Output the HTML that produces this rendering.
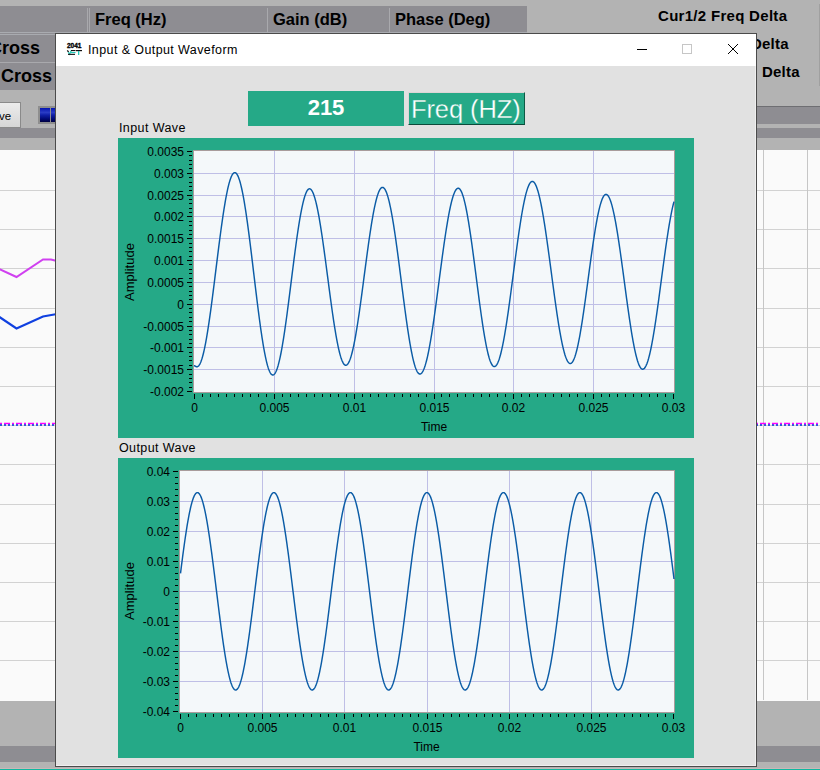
<!DOCTYPE html>
<html><head><meta charset="utf-8"><style>
html,body{margin:0;padding:0;}
body{width:820px;height:770px;overflow:hidden;position:relative;background:#b3b3b3;font-family:"Liberation Sans", sans-serif;-webkit-font-smoothing:antialiased;}
</style></head><body>
<div style="position:absolute;left:0px;top:6px;width:527px;height:27px;background:#8e8d92;"></div>
<div style="position:absolute;left:0px;top:32px;width:527px;height:1px;background:#a9abb0;"></div>
<div style="position:absolute;left:87px;top:8px;width:1px;height:24px;background:#a9a9ad;"></div>
<div style="position:absolute;left:89px;top:8px;width:1px;height:24px;background:#a9a9ad;"></div>
<div style="position:absolute;left:267px;top:8px;width:1px;height:24px;background:#a9a9ad;"></div>
<div style="position:absolute;left:389px;top:8px;width:1px;height:24px;background:#a9a9ad;"></div>
<div style="position:absolute;left:95px;top:11.03px;font-size:16.5px;line-height:1;color:#000;font-weight:bold;white-space:nowrap;">Freq (Hz)</div>
<div style="position:absolute;left:273px;top:11.03px;font-size:16.5px;line-height:1;color:#000;font-weight:bold;white-space:nowrap;">Gain (dB)</div>
<div style="position:absolute;left:395px;top:11.03px;font-size:16.5px;line-height:1;color:#000;font-weight:bold;white-space:nowrap;">Phase (Deg)</div>
<div style="position:absolute;left:0px;top:33px;width:55px;height:1px;background:#8e8d92;"></div>
<div style="position:absolute;left:0px;top:34px;width:55px;height:1px;background:#a9abb0;"></div>
<div style="position:absolute;left:0px;top:35px;width:55px;height:27px;background:#8e8d92;"></div>
<div style="position:absolute;left:0px;top:62px;width:55px;height:1px;background:#a9a9ad;"></div>
<div style="position:absolute;left:0px;top:63px;width:55px;height:27px;background:#8e8d92;"></div>
<div style="position:absolute;left:-11px;top:38.76px;font-size:18px;line-height:1;color:#000;font-weight:bold;white-space:nowrap;">Cross</div>
<div style="position:absolute;left:1px;top:66.76px;font-size:18px;line-height:1;color:#000;font-weight:bold;white-space:nowrap;">Cross</div>
<div style="position:absolute;left:-40px;top:102px;width:59px;height:24px;border:1px solid #8a8a8a;background:linear-gradient(#ececec,#d6d6d6);"></div>
<div style="position:absolute;left:-1px;top:111.27px;font-size:11.5px;line-height:1;color:#000;font-weight:normal;white-space:nowrap;">ve</div>
<div style="position:absolute;left:38px;top:106px;width:30px;height:14px;border:2px solid #8e8e8e;background:#8e8e8e;"></div>
<div style="position:absolute;left:40px;top:108px;width:10px;height:14px;background:linear-gradient(#0414b0,#2a3cc4 32%,#1020a8 50%,#000870 80%,#000040);"></div>
<div style="position:absolute;left:51px;top:108px;width:10px;height:14px;background:linear-gradient(#0414b0,#2a3cc4 32%,#1020a8 50%,#000870 80%,#000040);"></div>
<div style="position:absolute;left:0px;top:128px;width:60px;height:10px;background:#8e8d92;"></div>
<div style="position:absolute;left:756px;top:106px;width:64px;height:1px;background:#6e6e72;"></div>
<div style="position:absolute;left:756px;top:107px;width:64px;height:17px;background:#8e8d92;"></div>
<div style="position:absolute;left:756px;top:128px;width:64px;height:10px;background:#8e8d92;"></div>
<div style="position:absolute;left:0px;top:150px;width:820px;height:551px;background:#fafafa;"></div>
<div style="position:absolute;left:0px;top:190px;width:820px;height:1px;background:#d2d2d2;"></div>
<div style="position:absolute;left:0px;top:229px;width:820px;height:1px;background:#d2d2d2;"></div>
<div style="position:absolute;left:0px;top:268px;width:820px;height:1px;background:#d2d2d2;"></div>
<div style="position:absolute;left:0px;top:308px;width:820px;height:1px;background:#d2d2d2;"></div>
<div style="position:absolute;left:0px;top:347px;width:820px;height:1px;background:#d2d2d2;"></div>
<div style="position:absolute;left:0px;top:386px;width:820px;height:1px;background:#d2d2d2;"></div>
<div style="position:absolute;left:0px;top:425px;width:820px;height:1px;background:#d2d2d2;"></div>
<div style="position:absolute;left:0px;top:464px;width:820px;height:1px;background:#d2d2d2;"></div>
<div style="position:absolute;left:0px;top:504px;width:820px;height:1px;background:#d2d2d2;"></div>
<div style="position:absolute;left:0px;top:543px;width:820px;height:1px;background:#d2d2d2;"></div>
<div style="position:absolute;left:0px;top:582px;width:820px;height:1px;background:#d2d2d2;"></div>
<div style="position:absolute;left:0px;top:621px;width:820px;height:1px;background:#d2d2d2;"></div>
<div style="position:absolute;left:0px;top:660px;width:820px;height:1px;background:#d2d2d2;"></div>
<div style="position:absolute;left:763px;top:150px;width:1px;height:550px;background:#c6c6c6;"></div>
<div style="position:absolute;left:807px;top:150px;width:1px;height:550px;background:#c6c6c6;"></div>
<svg style="position:absolute;left:0;top:0" width="60" height="700"><polyline points="-2,268.5 16.5,277 43,259.5 51,259.5 57,261" fill="none" stroke="#d040f0" stroke-width="2"/><polyline points="-2,316 16.5,328.5 43,316.5 57,314" fill="none" stroke="#1040e0" stroke-width="2.2"/></svg>
<svg style="position:absolute;left:0px;top:420px" width="56" height="8"><line x1="0" y1="3.5" x2="56" y2="3.5" stroke="#ff00ff" stroke-width="1.5" stroke-dasharray="2 2 6 2"/><line x1="0" y1="5" x2="56" y2="5" stroke="#0030e0" stroke-width="1.5" stroke-dasharray="2 2"/></svg>
<svg style="position:absolute;left:756px;top:420px" width="64" height="8"><line x1="0" y1="3.5" x2="64" y2="3.5" stroke="#ff00ff" stroke-width="1.5" stroke-dasharray="2 2 6 2"/><line x1="0" y1="5" x2="64" y2="5" stroke="#0030e0" stroke-width="1.5" stroke-dasharray="2 2"/></svg>
<div style="position:absolute;left:0px;top:746px;width:820px;height:16px;background:#8e8d92;"></div>
<div style="position:absolute;left:0px;top:768px;width:820px;height:1px;background:#c8b8b8;"></div>
<div style="position:absolute;left:0px;top:769px;width:820px;height:1px;background:#10b8a0;"></div>
<div style="position:absolute;left:658px;top:8.30px;font-size:15px;line-height:1;color:#000;font-weight:bold;white-space:nowrap;letter-spacing:0.3px;">Cur1/2 Freq Delta</div>
<div style="position:absolute;left:751px;top:36.30px;font-size:15px;line-height:1;color:#000;font-weight:bold;white-space:nowrap;letter-spacing:0.2px;">Delta</div>
<div style="position:absolute;left:762px;top:64.30px;font-size:15px;line-height:1;color:#000;font-weight:bold;white-space:nowrap;letter-spacing:0.2px;">Delta</div>
<div style="position:absolute;left:819px;top:4px;width:1px;height:82px;background:#a0a0a0;"></div>
<div style="position:absolute;left:55px;top:33px;width:702px;height:734px;box-sizing:border-box;border:1px solid #4b4b4b;background:#e1e1e1;"></div>
<div style="position:absolute;left:56px;top:34px;width:700px;height:32px;background:#ffffff;"></div>
<div style="position:absolute;left:755px;top:66px;width:1px;height:700px;background:#efefef;"></div>
<div style="position:absolute;left:56px;top:765px;width:700px;height:1px;background:#efefef;"></div>
<svg style="position:absolute;left:0;top:0" width="100" height="70"><text x="67" y="48.3" font-size="7" font-weight="bold" fill="#000" stroke="#000" stroke-width="0.35" textLength="14.5" lengthAdjust="spacingAndGlyphs">2041</text><path d="M67.3 50.3 L68.6 52.2" stroke="#111" stroke-width="1.2"/><path d="M68.3 52.2 L69.6 54.3 L71.2 50.6" stroke="#20c8b8" stroke-width="1.2" fill="none"/><rect x="71" y="50" width="4.5" height="1.1" fill="#111"/><rect x="71" y="52" width="4.5" height="1.1" fill="#20c8b8"/><rect x="68" y="53.8" width="7" height="1.1" fill="#111"/><rect x="76" y="50" width="6" height="1.2" fill="#111"/><rect x="78" y="51" width="1.3" height="4" fill="#20c8b8"/></svg>
<div style="position:absolute;left:88px;top:44.42px;font-size:12.5px;line-height:1;color:#000;font-weight:normal;white-space:nowrap;letter-spacing:0.4px;">Input &amp; Output Waveform</div>
<div style="position:absolute;left:637px;top:49px;width:10px;height:1px;background:#000;"></div>
<div style="position:absolute;left:682px;top:44px;width:10px;height:10px;box-sizing:border-box;border:1px solid #c6c6c6;"></div>
<svg style="position:absolute;left:727px;top:43px" width="12" height="12"><path d="M1 1 L11 11 M11 1 L1 11" stroke="#000" stroke-width="1"/></svg>
<div style="position:absolute;left:248px;top:91px;width:156px;height:35px;background:#25a987;"></div>
<div style="position:absolute;left:248px;top:97px;width:156px;text-align:center;font-size:22px;line-height:1;font-weight:bold;color:#fff;">215</div>
<div style="position:absolute;left:408px;top:92px;width:117px;height:33px;box-sizing:border-box;background:#25a987;border-top:1px solid #dcd6d6;border-left:1px solid #dcd6d6;border-right:1px solid #0d5a45;border-bottom:1px solid #0d4a3a;"></div>
<div style="position:absolute;left:411px;top:96.91px;font-size:25.5px;line-height:1;color:#fff;font-weight:normal;white-space:nowrap;-webkit-text-stroke:0.3px #25a987;letter-spacing:-0.1px;">Freq (HZ)</div>
<div style="position:absolute;left:119px;top:122px;font-size:12.5px;line-height:1;color:#000;font-weight:normal;white-space:nowrap;letter-spacing:0.4px;">Input Wave</div>
<div style="position:absolute;left:118px;top:138px;width:576px;height:300px;background:#25a987;"></div>
<div style="position:absolute;left:193px;top:150px;width:482px;height:243px;box-sizing:border-box;border:1px solid #a89c9c;background:#f4f8fa;"></div>
<svg style="position:absolute;left:0;top:0;overflow:visible" width="820" height="770"><rect x="194" y="173" width="480" height="1" fill="#bfbfe6"/><rect x="194" y="195" width="480" height="1" fill="#bfbfe6"/><rect x="194" y="216" width="480" height="1" fill="#bfbfe6"/><rect x="194" y="238" width="480" height="1" fill="#bfbfe6"/><rect x="194" y="260" width="480" height="1" fill="#bfbfe6"/><rect x="194" y="282" width="480" height="1" fill="#bfbfe6"/><rect x="194" y="304" width="480" height="1" fill="#bfbfe6"/><rect x="194" y="326" width="480" height="1" fill="#bfbfe6"/><rect x="194" y="347" width="480" height="1" fill="#bfbfe6"/><rect x="194" y="369" width="480" height="1" fill="#bfbfe6"/><rect x="274" y="151" width="1" height="241" fill="#bfbfe6"/><rect x="354" y="151" width="1" height="241" fill="#bfbfe6"/><rect x="434" y="151" width="1" height="241" fill="#bfbfe6"/><rect x="513" y="151" width="1" height="241" fill="#bfbfe6"/><rect x="593" y="151" width="1" height="241" fill="#bfbfe6"/><rect x="189" y="151" width="3" height="1" fill="#000"/><rect x="189" y="155" width="3" height="1" fill="#000"/><rect x="189" y="160" width="3" height="1" fill="#000"/><rect x="189" y="164" width="3" height="1" fill="#000"/><rect x="189" y="168" width="3" height="1" fill="#000"/><rect x="189" y="173" width="3" height="1" fill="#000"/><rect x="189" y="177" width="3" height="1" fill="#000"/><rect x="189" y="182" width="3" height="1" fill="#000"/><rect x="189" y="186" width="3" height="1" fill="#000"/><rect x="189" y="190" width="3" height="1" fill="#000"/><rect x="189" y="195" width="3" height="1" fill="#000"/><rect x="189" y="199" width="3" height="1" fill="#000"/><rect x="189" y="203" width="3" height="1" fill="#000"/><rect x="189" y="208" width="3" height="1" fill="#000"/><rect x="189" y="212" width="3" height="1" fill="#000"/><rect x="189" y="216" width="3" height="1" fill="#000"/><rect x="189" y="221" width="3" height="1" fill="#000"/><rect x="189" y="225" width="3" height="1" fill="#000"/><rect x="189" y="230" width="3" height="1" fill="#000"/><rect x="189" y="234" width="3" height="1" fill="#000"/><rect x="189" y="238" width="3" height="1" fill="#000"/><rect x="189" y="243" width="3" height="1" fill="#000"/><rect x="189" y="247" width="3" height="1" fill="#000"/><rect x="189" y="251" width="3" height="1" fill="#000"/><rect x="189" y="256" width="3" height="1" fill="#000"/><rect x="189" y="260" width="3" height="1" fill="#000"/><rect x="189" y="264" width="3" height="1" fill="#000"/><rect x="189" y="269" width="3" height="1" fill="#000"/><rect x="189" y="273" width="3" height="1" fill="#000"/><rect x="189" y="278" width="3" height="1" fill="#000"/><rect x="189" y="282" width="3" height="1" fill="#000"/><rect x="189" y="286" width="3" height="1" fill="#000"/><rect x="189" y="291" width="3" height="1" fill="#000"/><rect x="189" y="295" width="3" height="1" fill="#000"/><rect x="189" y="299" width="3" height="1" fill="#000"/><rect x="189" y="304" width="3" height="1" fill="#000"/><rect x="189" y="308" width="3" height="1" fill="#000"/><rect x="189" y="312" width="3" height="1" fill="#000"/><rect x="189" y="317" width="3" height="1" fill="#000"/><rect x="189" y="321" width="3" height="1" fill="#000"/><rect x="189" y="326" width="3" height="1" fill="#000"/><rect x="189" y="330" width="3" height="1" fill="#000"/><rect x="189" y="334" width="3" height="1" fill="#000"/><rect x="189" y="339" width="3" height="1" fill="#000"/><rect x="189" y="343" width="3" height="1" fill="#000"/><rect x="189" y="347" width="3" height="1" fill="#000"/><rect x="189" y="352" width="3" height="1" fill="#000"/><rect x="189" y="356" width="3" height="1" fill="#000"/><rect x="189" y="360" width="3" height="1" fill="#000"/><rect x="189" y="365" width="3" height="1" fill="#000"/><rect x="189" y="369" width="3" height="1" fill="#000"/><rect x="189" y="374" width="3" height="1" fill="#000"/><rect x="189" y="378" width="3" height="1" fill="#000"/><rect x="189" y="382" width="3" height="1" fill="#000"/><rect x="189" y="387" width="3" height="1" fill="#000"/><rect x="189" y="391" width="3" height="1" fill="#000"/><rect x="187" y="151" width="5" height="1" fill="#000"/><rect x="187" y="173" width="5" height="1" fill="#000"/><rect x="187" y="195" width="5" height="1" fill="#000"/><rect x="187" y="216" width="5" height="1" fill="#000"/><rect x="187" y="238" width="5" height="1" fill="#000"/><rect x="187" y="260" width="5" height="1" fill="#000"/><rect x="187" y="282" width="5" height="1" fill="#000"/><rect x="187" y="304" width="5" height="1" fill="#000"/><rect x="187" y="326" width="5" height="1" fill="#000"/><rect x="187" y="347" width="5" height="1" fill="#000"/><rect x="187" y="369" width="5" height="1" fill="#000"/><rect x="187" y="391" width="5" height="1" fill="#000"/><rect x="194" y="394" width="1" height="3" fill="#000"/><rect x="202" y="394" width="1" height="3" fill="#000"/><rect x="210" y="394" width="1" height="3" fill="#000"/><rect x="218" y="394" width="1" height="3" fill="#000"/><rect x="226" y="394" width="1" height="3" fill="#000"/><rect x="234" y="394" width="1" height="3" fill="#000"/><rect x="242" y="394" width="1" height="3" fill="#000"/><rect x="250" y="394" width="1" height="3" fill="#000"/><rect x="258" y="394" width="1" height="3" fill="#000"/><rect x="266" y="394" width="1" height="3" fill="#000"/><rect x="274" y="394" width="1" height="3" fill="#000"/><rect x="282" y="394" width="1" height="3" fill="#000"/><rect x="290" y="394" width="1" height="3" fill="#000"/><rect x="298" y="394" width="1" height="3" fill="#000"/><rect x="306" y="394" width="1" height="3" fill="#000"/><rect x="314" y="394" width="1" height="3" fill="#000"/><rect x="322" y="394" width="1" height="3" fill="#000"/><rect x="330" y="394" width="1" height="3" fill="#000"/><rect x="338" y="394" width="1" height="3" fill="#000"/><rect x="346" y="394" width="1" height="3" fill="#000"/><rect x="354" y="394" width="1" height="3" fill="#000"/><rect x="362" y="394" width="1" height="3" fill="#000"/><rect x="370" y="394" width="1" height="3" fill="#000"/><rect x="378" y="394" width="1" height="3" fill="#000"/><rect x="386" y="394" width="1" height="3" fill="#000"/><rect x="394" y="394" width="1" height="3" fill="#000"/><rect x="402" y="394" width="1" height="3" fill="#000"/><rect x="410" y="394" width="1" height="3" fill="#000"/><rect x="418" y="394" width="1" height="3" fill="#000"/><rect x="426" y="394" width="1" height="3" fill="#000"/><rect x="434" y="394" width="1" height="3" fill="#000"/><rect x="441" y="394" width="1" height="3" fill="#000"/><rect x="449" y="394" width="1" height="3" fill="#000"/><rect x="457" y="394" width="1" height="3" fill="#000"/><rect x="465" y="394" width="1" height="3" fill="#000"/><rect x="473" y="394" width="1" height="3" fill="#000"/><rect x="481" y="394" width="1" height="3" fill="#000"/><rect x="489" y="394" width="1" height="3" fill="#000"/><rect x="497" y="394" width="1" height="3" fill="#000"/><rect x="505" y="394" width="1" height="3" fill="#000"/><rect x="513" y="394" width="1" height="3" fill="#000"/><rect x="521" y="394" width="1" height="3" fill="#000"/><rect x="529" y="394" width="1" height="3" fill="#000"/><rect x="537" y="394" width="1" height="3" fill="#000"/><rect x="545" y="394" width="1" height="3" fill="#000"/><rect x="553" y="394" width="1" height="3" fill="#000"/><rect x="561" y="394" width="1" height="3" fill="#000"/><rect x="569" y="394" width="1" height="3" fill="#000"/><rect x="577" y="394" width="1" height="3" fill="#000"/><rect x="585" y="394" width="1" height="3" fill="#000"/><rect x="593" y="394" width="1" height="3" fill="#000"/><rect x="601" y="394" width="1" height="3" fill="#000"/><rect x="609" y="394" width="1" height="3" fill="#000"/><rect x="617" y="394" width="1" height="3" fill="#000"/><rect x="625" y="394" width="1" height="3" fill="#000"/><rect x="633" y="394" width="1" height="3" fill="#000"/><rect x="641" y="394" width="1" height="3" fill="#000"/><rect x="649" y="394" width="1" height="3" fill="#000"/><rect x="657" y="394" width="1" height="3" fill="#000"/><rect x="665" y="394" width="1" height="3" fill="#000"/><rect x="673" y="394" width="1" height="3" fill="#000"/><rect x="194" y="394" width="1" height="5" fill="#000"/><rect x="274" y="394" width="1" height="5" fill="#000"/><rect x="354" y="394" width="1" height="5" fill="#000"/><rect x="434" y="394" width="1" height="5" fill="#000"/><rect x="513" y="394" width="1" height="5" fill="#000"/><rect x="593" y="394" width="1" height="5" fill="#000"/><rect x="673" y="394" width="1" height="5" fill="#000"/><polyline points="194.00,365.71 194.50,365.78 195.00,365.98 195.50,366.26 196.00,366.53 196.50,366.73 197.00,366.80 197.50,366.72 198.00,366.47 198.50,366.05 199.00,365.47 199.50,364.72 200.00,363.80 200.50,362.72 201.00,361.49 201.50,360.09 202.00,358.54 202.50,356.83 203.00,354.98 203.50,352.98 204.00,350.83 204.50,348.54 205.00,346.12 205.50,343.57 206.00,340.88 206.50,338.08 207.00,335.15 207.50,332.12 208.00,328.97 208.50,325.73 209.00,322.38 209.50,318.95 210.00,315.43 210.50,311.83 211.00,308.16 211.50,304.43 212.00,300.63 212.50,296.78 213.00,292.88 213.50,288.94 214.00,284.97 214.50,280.98 215.00,276.96 215.50,272.93 216.00,268.90 216.50,264.86 217.00,260.84 217.50,256.83 218.00,252.84 218.50,248.88 219.00,244.96 219.50,241.08 220.00,237.25 220.50,233.48 221.00,229.77 221.50,226.12 222.00,222.56 222.50,219.07 223.00,215.67 223.50,212.37 224.00,209.16 224.50,206.06 225.00,203.07 225.50,200.19 226.00,197.44 226.50,194.80 227.00,192.30 227.50,189.93 228.00,187.70 228.50,185.61 229.00,183.67 229.50,181.87 230.00,180.23 230.50,178.74 231.00,177.40 231.50,176.23 232.00,175.22 232.50,174.37 233.00,173.69 233.50,173.17 234.00,172.82 234.50,172.63 235.00,172.62 235.50,172.77 236.00,173.10 236.50,173.60 237.00,174.27 237.50,175.11 238.00,176.12 238.50,177.30 239.00,178.64 239.50,180.15 240.00,181.81 240.50,183.63 241.00,185.61 241.50,187.73 242.00,190.01 242.50,192.42 243.00,194.98 243.50,197.67 244.00,200.49 244.50,203.44 245.00,206.50 245.50,209.68 246.00,212.97 246.50,216.37 247.00,219.86 247.50,223.44 248.00,227.11 248.50,230.86 249.00,234.69 249.50,238.58 250.00,242.53 250.50,246.53 251.00,250.58 251.50,254.67 252.00,258.80 252.50,262.94 253.00,267.11 253.50,271.29 254.00,275.47 254.50,279.65 255.00,283.82 255.50,287.98 256.00,292.10 256.50,296.20 257.00,300.26 257.50,304.27 258.00,308.24 258.50,312.14 259.00,315.98 259.50,319.74 260.00,323.43 260.50,327.03 261.00,330.54 261.50,333.96 262.00,337.27 262.50,340.47 263.00,343.56 263.50,346.53 264.00,349.38 264.50,352.09 265.00,354.68 265.50,357.12 266.00,359.42 266.50,361.58 267.00,363.58 267.50,365.44 268.00,367.13 268.50,368.67 269.00,370.04 269.50,371.25 270.00,372.30 270.50,373.17 271.00,373.88 271.50,374.41 272.00,374.78 272.50,374.97 273.00,374.98 273.50,374.83 274.00,374.51 274.50,374.01 275.00,373.35 275.50,372.52 276.00,371.53 276.50,370.37 277.00,369.05 277.50,367.56 278.00,365.93 278.50,364.13 279.00,362.19 279.50,360.10 280.00,357.87 280.50,355.50 281.00,352.99 281.50,350.35 282.00,347.59 282.50,344.71 283.00,341.71 283.50,338.60 284.00,335.39 284.50,332.08 285.00,328.68 285.50,325.20 286.00,321.63 286.50,317.99 287.00,314.29 287.50,310.52 288.00,306.70 288.50,302.84 289.00,298.94 289.50,295.01 290.00,291.06 290.50,287.08 291.00,283.10 291.50,279.12 292.00,275.14 292.50,271.17 293.00,267.23 293.50,263.31 294.00,259.42 294.50,255.58 295.00,251.78 295.50,248.04 296.00,244.36 296.50,240.75 297.00,237.21 297.50,233.76 298.00,230.39 298.50,227.12 299.00,223.95 299.50,220.89 300.00,217.94 300.50,215.10 301.00,212.39 301.50,209.80 302.00,207.35 302.50,205.03 303.00,202.86 303.50,200.83 304.00,198.94 304.50,197.21 305.00,195.64 305.50,194.22 306.00,192.96 306.50,191.87 307.00,190.94 307.50,190.18 308.00,189.58 308.50,189.16 309.00,188.90 309.50,188.81 310.00,188.90 310.50,189.15 311.00,189.56 311.50,190.13 312.00,190.87 312.50,191.77 313.00,192.83 313.50,194.05 314.00,195.42 314.50,196.95 315.00,198.62 315.50,200.45 316.00,202.41 316.50,204.52 317.00,206.76 317.50,209.13 318.00,211.63 318.50,214.25 319.00,216.99 319.50,219.84 320.00,222.80 320.50,225.87 321.00,229.02 321.50,232.27 322.00,235.60 322.50,239.01 323.00,242.49 323.50,246.03 324.00,249.63 324.50,253.29 325.00,256.98 325.50,260.72 326.00,264.49 326.50,268.28 327.00,272.08 327.50,275.90 328.00,279.71 328.50,283.53 329.00,287.33 329.50,291.11 330.00,294.86 330.50,298.58 331.00,302.27 331.50,305.90 332.00,309.48 332.50,313.00 333.00,316.45 333.50,319.83 334.00,323.12 334.50,326.34 335.00,329.46 335.50,332.48 336.00,335.39 336.50,338.20 337.00,340.90 337.50,343.47 338.00,345.92 338.50,348.24 339.00,350.43 339.50,352.48 340.00,354.39 340.50,356.15 341.00,357.77 341.50,359.23 342.00,360.54 342.50,361.70 343.00,362.69 343.50,363.53 344.00,364.20 344.50,364.71 345.00,365.06 345.50,365.24 346.00,365.26 346.50,365.11 347.00,364.80 347.50,364.33 348.00,363.70 348.50,362.90 349.00,361.95 349.50,360.85 350.00,359.58 350.50,358.17 351.00,356.60 351.50,354.89 352.00,353.03 352.50,351.04 353.00,348.90 353.50,346.64 354.00,344.24 354.50,341.72 355.00,339.08 355.50,336.33 356.00,333.46 356.50,330.49 357.00,327.43 357.50,324.26 358.00,321.01 358.50,317.68 359.00,314.28 359.50,310.80 360.00,307.26 360.50,303.66 361.00,300.02 361.50,296.32 362.00,292.60 362.50,288.84 363.00,285.06 363.50,281.27 364.00,277.46 364.50,273.65 365.00,269.85 365.50,266.06 366.00,262.29 366.50,258.55 367.00,254.83 367.50,251.16 368.00,247.53 368.50,243.96 369.00,240.44 369.50,236.99 370.00,233.61 370.50,230.31 371.00,227.10 371.50,223.97 372.00,220.94 372.50,218.02 373.00,215.20 373.50,212.49 374.00,209.89 374.50,207.42 375.00,205.08 375.50,202.87 376.00,200.79 376.50,198.85 377.00,197.05 377.50,195.39 378.00,193.89 378.50,192.53 379.00,191.33 379.50,190.29 380.00,189.40 380.50,188.67 381.00,188.10 381.50,187.69 382.00,187.45 382.50,187.37 383.00,187.45 383.50,187.70 384.00,188.11 384.50,188.68 385.00,189.42 385.50,190.32 386.00,191.37 386.50,192.59 387.00,193.96 387.50,195.48 388.00,197.15 388.50,198.97 389.00,200.94 389.50,203.04 390.00,205.29 390.50,207.66 391.00,210.17 391.50,212.79 392.00,215.54 392.50,218.41 393.00,221.38 393.50,224.46 394.00,227.63 394.50,230.90 395.00,234.26 395.50,237.70 396.00,241.22 396.50,244.80 397.00,248.45 397.50,252.16 398.00,255.91 398.50,259.71 399.00,263.55 399.50,267.42 400.00,271.31 400.50,275.22 401.00,279.13 401.50,283.05 402.00,286.97 402.50,290.87 403.00,294.76 403.50,298.62 404.00,302.45 404.50,306.24 405.00,309.99 405.50,313.68 406.00,317.32 406.50,320.89 407.00,324.40 407.50,327.82 408.00,331.16 408.50,334.41 409.00,337.57 409.50,340.63 410.00,343.58 410.50,346.42 411.00,349.14 411.50,351.75 412.00,354.23 412.50,356.58 413.00,358.79 413.50,360.87 414.00,362.80 414.50,364.60 415.00,366.24 415.50,367.73 416.00,369.07 416.50,370.25 417.00,371.28 417.50,372.14 418.00,372.85 418.50,373.39 419.00,373.77 419.50,373.98 420.00,374.03 420.50,373.92 421.00,373.66 421.50,373.23 422.00,372.66 422.50,371.93 423.00,371.05 423.50,370.01 424.00,368.83 424.50,367.50 425.00,366.02 425.50,364.40 426.00,362.65 426.50,360.75 427.00,358.72 427.50,356.56 428.00,354.27 428.50,351.86 429.00,349.33 429.50,346.69 430.00,343.94 430.50,341.08 431.00,338.12 431.50,335.06 432.00,331.91 432.50,328.68 433.00,325.37 433.50,321.98 434.00,318.53 434.50,315.01 435.00,311.43 435.50,307.81 436.00,304.14 436.50,300.43 437.00,296.69 437.50,292.92 438.00,289.13 438.50,285.33 439.00,281.52 439.50,277.71 440.00,273.91 440.50,270.12 441.00,266.34 441.50,262.60 442.00,258.88 442.50,255.20 443.00,251.57 443.50,247.98 444.00,244.45 444.50,240.98 445.00,237.58 445.50,234.25 446.00,231.00 446.50,227.84 447.00,224.77 447.50,221.79 448.00,218.91 448.50,216.13 449.00,213.46 449.50,210.91 450.00,208.48 450.50,206.17 451.00,203.98 451.50,201.92 452.00,200.00 452.50,198.22 453.00,196.57 453.50,195.06 454.00,193.70 454.50,192.49 455.00,191.43 455.50,190.51 456.00,189.75 456.50,189.15 457.00,188.69 457.50,188.40 458.00,188.26 458.50,188.28 459.00,188.46 459.50,188.82 460.00,189.34 460.50,190.03 461.00,190.88 461.50,191.90 462.00,193.08 462.50,194.42 463.00,195.91 463.50,197.56 464.00,199.36 464.50,201.31 465.00,203.41 465.50,205.64 466.00,208.01 466.50,210.51 467.00,213.14 467.50,215.89 468.00,218.76 468.50,221.73 469.00,224.81 469.50,228.00 470.00,231.27 470.50,234.63 471.00,238.08 471.50,241.60 472.00,245.18 472.50,248.83 473.00,252.53 473.50,256.28 474.00,260.07 474.50,263.89 475.00,267.73 475.50,271.60 476.00,275.48 476.50,279.35 477.00,283.23 477.50,287.10 478.00,290.94 478.50,294.76 479.00,298.55 479.50,302.30 480.00,306.00 480.50,309.65 481.00,313.23 481.50,316.75 482.00,320.20 482.50,323.56 483.00,326.83 483.50,330.02 484.00,333.10 484.50,336.07 485.00,338.94 485.50,341.69 486.00,344.32 486.50,346.82 487.00,349.19 487.50,351.42 488.00,353.52 488.50,355.46 489.00,357.27 489.50,358.92 490.00,360.41 490.50,361.75 491.00,362.93 491.50,363.95 492.00,364.80 492.50,365.49 493.00,366.01 493.50,366.37 494.00,366.55 494.50,366.57 495.00,366.43 495.50,366.13 496.00,365.67 496.50,365.06 497.00,364.29 497.50,363.36 498.00,362.29 498.50,361.06 499.00,359.68 499.50,358.16 500.00,356.49 500.50,354.69 501.00,352.74 501.50,350.66 502.00,348.45 502.50,346.11 503.00,343.65 503.50,341.07 504.00,338.37 504.50,335.57 505.00,332.66 505.50,329.65 506.00,326.54 506.50,323.35 507.00,320.07 507.50,316.71 508.00,313.28 508.50,309.78 509.00,306.22 509.50,302.61 510.00,298.94 510.50,295.24 511.00,291.50 511.50,287.72 512.00,283.93 512.50,280.12 513.00,276.29 513.50,272.47 514.00,268.64 514.50,264.83 515.00,261.03 515.50,257.25 516.00,253.50 516.50,249.79 517.00,246.11 517.50,242.49 518.00,238.92 518.50,235.41 519.00,231.96 519.50,228.59 520.00,225.29 520.50,222.08 521.00,218.96 521.50,215.93 522.00,213.00 522.50,210.17 523.00,207.45 523.50,204.85 524.00,202.37 524.50,200.00 525.00,197.77 525.50,195.66 526.00,193.69 526.50,191.85 527.00,190.16 527.50,188.60 528.00,187.20 528.50,185.94 529.00,184.83 529.50,183.88 530.00,183.08 530.50,182.43 531.00,181.94 531.50,181.61 532.00,181.44 532.50,181.42 533.00,181.56 533.50,181.86 534.00,182.31 534.50,182.91 535.00,183.67 535.50,184.58 536.00,185.64 536.50,186.84 537.00,188.20 537.50,189.69 538.00,191.33 538.50,193.11 539.00,195.02 539.50,197.07 540.00,199.24 540.50,201.54 541.00,203.96 541.50,206.50 542.00,209.15 542.50,211.91 543.00,214.77 543.50,217.73 544.00,220.79 544.50,223.93 545.00,227.15 545.50,230.46 546.00,233.83 546.50,237.27 547.00,240.77 547.50,244.33 548.00,247.93 548.50,251.57 549.00,255.25 549.50,258.96 550.00,262.70 550.50,266.45 551.00,270.21 551.50,273.97 552.00,277.73 552.50,281.48 553.00,285.22 553.50,288.93 554.00,292.62 554.50,296.27 555.00,299.88 555.50,303.45 556.00,306.96 556.50,310.41 557.00,313.80 557.50,317.12 558.00,320.36 558.50,323.52 559.00,326.59 559.50,329.57 560.00,332.45 560.50,335.23 561.00,337.90 561.50,340.46 562.00,342.91 562.50,345.23 563.00,347.43 563.50,349.50 564.00,351.44 564.50,353.25 565.00,354.92 565.50,356.44 566.00,357.82 566.50,359.06 567.00,360.15 567.50,361.09 568.00,361.88 568.50,362.51 569.00,362.99 569.50,363.32 570.00,363.49 570.50,363.50 571.00,363.36 571.50,363.05 572.00,362.57 572.50,361.94 573.00,361.14 573.50,360.19 574.00,359.07 574.50,357.81 575.00,356.39 575.50,354.82 576.00,353.10 576.50,351.24 577.00,349.24 577.50,347.10 578.00,344.83 578.50,342.44 579.00,339.92 579.50,337.28 580.00,334.53 580.50,331.68 581.00,328.72 581.50,325.66 582.00,322.52 582.50,319.28 583.00,315.98 583.50,312.60 584.00,309.15 584.50,305.65 585.00,302.09 585.50,298.49 586.00,294.85 586.50,291.18 587.00,287.49 587.50,283.78 588.00,280.06 588.50,276.34 589.00,272.63 589.50,268.93 590.00,265.24 590.50,261.58 591.00,257.96 591.50,254.38 592.00,250.84 592.50,247.36 593.00,243.94 593.50,240.59 594.00,237.31 594.50,234.11 595.00,231.00 595.50,227.98 596.00,225.07 596.50,222.25 597.00,219.55 597.50,216.96 598.00,214.49 598.50,212.14 599.00,209.92 599.50,207.84 600.00,205.90 600.50,204.09 601.00,202.43 601.50,200.92 602.00,199.57 602.50,198.36 603.00,197.31 603.50,196.42 604.00,195.69 604.50,195.12 605.00,194.71 605.50,194.46 606.00,194.38 606.50,194.46 607.00,194.70 607.50,195.10 608.00,195.66 608.50,196.37 609.00,197.25 609.50,198.27 610.00,199.45 610.50,200.79 611.00,202.27 611.50,203.89 612.00,205.66 612.50,207.57 613.00,209.61 613.50,211.79 614.00,214.09 614.50,216.52 615.00,219.06 615.50,221.73 616.00,224.50 616.50,227.38 617.00,230.35 617.50,233.43 618.00,236.58 618.50,239.83 619.00,243.15 619.50,246.54 620.00,249.99 620.50,253.51 621.00,257.07 621.50,260.68 622.00,264.33 622.50,268.01 623.00,271.72 623.50,275.44 624.00,279.18 624.50,282.92 625.00,286.66 625.50,290.39 626.00,294.10 626.50,297.79 627.00,301.46 627.50,305.08 628.00,308.67 628.50,312.20 629.00,315.68 629.50,319.10 630.00,322.45 630.50,325.72 631.00,328.91 631.50,332.02 632.00,335.04 632.50,337.96 633.00,340.77 633.50,343.48 634.00,346.07 634.50,348.55 635.00,350.90 635.50,353.13 636.00,355.23 636.50,357.19 637.00,359.01 637.50,360.70 638.00,362.23 638.50,363.62 639.00,364.87 639.50,365.95 640.00,366.89 640.50,367.67 641.00,368.29 641.50,368.75 642.00,369.06 642.50,369.20 643.00,369.19 643.50,369.01 644.00,368.68 644.50,368.19 645.00,367.54 645.50,366.74 646.00,365.78 646.50,364.67 647.00,363.42 647.50,362.01 648.00,360.45 648.50,358.76 649.00,356.92 649.50,354.95 650.00,352.84 650.50,350.61 651.00,348.25 651.50,345.76 652.00,343.17 652.50,340.45 653.00,337.63 653.50,334.71 654.00,331.69 654.50,328.58 655.00,325.39 655.50,322.11 656.00,318.75 656.50,315.33 657.00,311.85 657.50,308.31 658.00,304.71 658.50,301.08 659.00,297.40 659.50,293.70 660.00,289.97 660.50,286.22 661.00,282.46 661.50,278.70 662.00,274.93 662.50,271.18 663.00,267.44 663.50,263.73 664.00,260.04 664.50,256.39 665.00,252.78 665.50,249.21 666.00,245.70 666.50,242.26 667.00,238.87 667.50,235.57 668.00,232.34 668.50,229.19 669.00,226.13 669.50,223.17 670.00,220.31 670.50,217.56 671.00,214.91 671.50,212.38 672.00,209.97 672.50,207.69 673.00,205.53 673.50,203.50 674.00,201.61" fill="none" stroke="#0b5ca6" stroke-width="1.45" stroke-linejoin="round"/></svg>
<div style="position:absolute;left:104px;top:145.64px;width:80px;text-align:right;font-size:12px;line-height:1;white-space:nowrap;">0.0035</div>
<div style="position:absolute;left:104px;top:167.64px;width:80px;text-align:right;font-size:12px;line-height:1;white-space:nowrap;">0.003</div>
<div style="position:absolute;left:104px;top:189.64px;width:80px;text-align:right;font-size:12px;line-height:1;white-space:nowrap;">0.0025</div>
<div style="position:absolute;left:104px;top:210.64px;width:80px;text-align:right;font-size:12px;line-height:1;white-space:nowrap;">0.002</div>
<div style="position:absolute;left:104px;top:232.64px;width:80px;text-align:right;font-size:12px;line-height:1;white-space:nowrap;">0.0015</div>
<div style="position:absolute;left:104px;top:254.64px;width:80px;text-align:right;font-size:12px;line-height:1;white-space:nowrap;">0.001</div>
<div style="position:absolute;left:104px;top:276.64px;width:80px;text-align:right;font-size:12px;line-height:1;white-space:nowrap;">0.0005</div>
<div style="position:absolute;left:104px;top:298.64px;width:80px;text-align:right;font-size:12px;line-height:1;white-space:nowrap;">0</div>
<div style="position:absolute;left:104px;top:320.64px;width:80px;text-align:right;font-size:12px;line-height:1;white-space:nowrap;">-0.0005</div>
<div style="position:absolute;left:104px;top:341.64px;width:80px;text-align:right;font-size:12px;line-height:1;white-space:nowrap;">-0.001</div>
<div style="position:absolute;left:104px;top:363.64px;width:80px;text-align:right;font-size:12px;line-height:1;white-space:nowrap;">-0.0015</div>
<div style="position:absolute;left:104px;top:385.64px;width:80px;text-align:right;font-size:12px;line-height:1;white-space:nowrap;">-0.002</div>
<div style="position:absolute;left:154.5px;top:401.64px;width:80px;text-align:center;font-size:12px;line-height:1;white-space:nowrap;">0</div>
<div style="position:absolute;left:234.5px;top:401.64px;width:80px;text-align:center;font-size:12px;line-height:1;white-space:nowrap;">0.005</div>
<div style="position:absolute;left:314.5px;top:401.64px;width:80px;text-align:center;font-size:12px;line-height:1;white-space:nowrap;">0.01</div>
<div style="position:absolute;left:394.5px;top:401.64px;width:80px;text-align:center;font-size:12px;line-height:1;white-space:nowrap;">0.015</div>
<div style="position:absolute;left:473.5px;top:401.64px;width:80px;text-align:center;font-size:12px;line-height:1;white-space:nowrap;">0.02</div>
<div style="position:absolute;left:553.5px;top:401.64px;width:80px;text-align:center;font-size:12px;line-height:1;white-space:nowrap;">0.025</div>
<div style="position:absolute;left:633.5px;top:401.64px;width:80px;text-align:center;font-size:12px;line-height:1;white-space:nowrap;">0.03</div>
<div style="position:absolute;left:394px;top:421px;width:80px;text-align:center;font-size:12px;line-height:1;">Time</div>
<div style="position:absolute;left:90px;top:264.5px;width:80px;height:14px;text-align:center;font-size:13px;line-height:14px;transform:rotate(-90deg);">Amplitude</div>
<div style="position:absolute;left:119px;top:442px;font-size:12.5px;line-height:1;color:#000;font-weight:normal;white-space:nowrap;letter-spacing:0.4px;">Output Wave</div>
<div style="position:absolute;left:118px;top:458px;width:576px;height:300px;background:#25a987;"></div>
<div style="position:absolute;left:179px;top:470px;width:496px;height:243px;box-sizing:border-box;border:1px solid #a89c9c;background:#f4f8fa;"></div>
<svg style="position:absolute;left:0;top:0;overflow:visible" width="820" height="770"><rect x="180" y="501" width="494" height="1" fill="#bfbfe6"/><rect x="180" y="531" width="494" height="1" fill="#bfbfe6"/><rect x="180" y="561" width="494" height="1" fill="#bfbfe6"/><rect x="180" y="591" width="494" height="1" fill="#bfbfe6"/><rect x="180" y="621" width="494" height="1" fill="#bfbfe6"/><rect x="180" y="651" width="494" height="1" fill="#bfbfe6"/><rect x="180" y="681" width="494" height="1" fill="#bfbfe6"/><rect x="262" y="471" width="1" height="241" fill="#bfbfe6"/><rect x="344" y="471" width="1" height="241" fill="#bfbfe6"/><rect x="427" y="471" width="1" height="241" fill="#bfbfe6"/><rect x="509" y="471" width="1" height="241" fill="#bfbfe6"/><rect x="591" y="471" width="1" height="241" fill="#bfbfe6"/><rect x="175" y="471" width="3" height="1" fill="#000"/><rect x="175" y="477" width="3" height="1" fill="#000"/><rect x="175" y="483" width="3" height="1" fill="#000"/><rect x="175" y="489" width="3" height="1" fill="#000"/><rect x="175" y="495" width="3" height="1" fill="#000"/><rect x="175" y="501" width="3" height="1" fill="#000"/><rect x="175" y="507" width="3" height="1" fill="#000"/><rect x="175" y="513" width="3" height="1" fill="#000"/><rect x="175" y="519" width="3" height="1" fill="#000"/><rect x="175" y="525" width="3" height="1" fill="#000"/><rect x="175" y="531" width="3" height="1" fill="#000"/><rect x="175" y="537" width="3" height="1" fill="#000"/><rect x="175" y="543" width="3" height="1" fill="#000"/><rect x="175" y="549" width="3" height="1" fill="#000"/><rect x="175" y="555" width="3" height="1" fill="#000"/><rect x="175" y="561" width="3" height="1" fill="#000"/><rect x="175" y="567" width="3" height="1" fill="#000"/><rect x="175" y="573" width="3" height="1" fill="#000"/><rect x="175" y="579" width="3" height="1" fill="#000"/><rect x="175" y="585" width="3" height="1" fill="#000"/><rect x="175" y="591" width="3" height="1" fill="#000"/><rect x="175" y="597" width="3" height="1" fill="#000"/><rect x="175" y="603" width="3" height="1" fill="#000"/><rect x="175" y="609" width="3" height="1" fill="#000"/><rect x="175" y="615" width="3" height="1" fill="#000"/><rect x="175" y="621" width="3" height="1" fill="#000"/><rect x="175" y="627" width="3" height="1" fill="#000"/><rect x="175" y="633" width="3" height="1" fill="#000"/><rect x="175" y="639" width="3" height="1" fill="#000"/><rect x="175" y="645" width="3" height="1" fill="#000"/><rect x="175" y="651" width="3" height="1" fill="#000"/><rect x="175" y="657" width="3" height="1" fill="#000"/><rect x="175" y="663" width="3" height="1" fill="#000"/><rect x="175" y="669" width="3" height="1" fill="#000"/><rect x="175" y="675" width="3" height="1" fill="#000"/><rect x="175" y="681" width="3" height="1" fill="#000"/><rect x="175" y="687" width="3" height="1" fill="#000"/><rect x="175" y="693" width="3" height="1" fill="#000"/><rect x="175" y="699" width="3" height="1" fill="#000"/><rect x="175" y="705" width="3" height="1" fill="#000"/><rect x="175" y="711" width="3" height="1" fill="#000"/><rect x="173" y="471" width="5" height="1" fill="#000"/><rect x="173" y="501" width="5" height="1" fill="#000"/><rect x="173" y="531" width="5" height="1" fill="#000"/><rect x="173" y="561" width="5" height="1" fill="#000"/><rect x="173" y="591" width="5" height="1" fill="#000"/><rect x="173" y="621" width="5" height="1" fill="#000"/><rect x="173" y="651" width="5" height="1" fill="#000"/><rect x="173" y="681" width="5" height="1" fill="#000"/><rect x="173" y="711" width="5" height="1" fill="#000"/><rect x="180" y="714" width="1" height="3" fill="#000"/><rect x="188" y="714" width="1" height="3" fill="#000"/><rect x="196" y="714" width="1" height="3" fill="#000"/><rect x="205" y="714" width="1" height="3" fill="#000"/><rect x="213" y="714" width="1" height="3" fill="#000"/><rect x="221" y="714" width="1" height="3" fill="#000"/><rect x="229" y="714" width="1" height="3" fill="#000"/><rect x="238" y="714" width="1" height="3" fill="#000"/><rect x="246" y="714" width="1" height="3" fill="#000"/><rect x="254" y="714" width="1" height="3" fill="#000"/><rect x="262" y="714" width="1" height="3" fill="#000"/><rect x="270" y="714" width="1" height="3" fill="#000"/><rect x="279" y="714" width="1" height="3" fill="#000"/><rect x="287" y="714" width="1" height="3" fill="#000"/><rect x="295" y="714" width="1" height="3" fill="#000"/><rect x="303" y="714" width="1" height="3" fill="#000"/><rect x="311" y="714" width="1" height="3" fill="#000"/><rect x="320" y="714" width="1" height="3" fill="#000"/><rect x="328" y="714" width="1" height="3" fill="#000"/><rect x="336" y="714" width="1" height="3" fill="#000"/><rect x="344" y="714" width="1" height="3" fill="#000"/><rect x="353" y="714" width="1" height="3" fill="#000"/><rect x="361" y="714" width="1" height="3" fill="#000"/><rect x="369" y="714" width="1" height="3" fill="#000"/><rect x="377" y="714" width="1" height="3" fill="#000"/><rect x="385" y="714" width="1" height="3" fill="#000"/><rect x="394" y="714" width="1" height="3" fill="#000"/><rect x="402" y="714" width="1" height="3" fill="#000"/><rect x="410" y="714" width="1" height="3" fill="#000"/><rect x="418" y="714" width="1" height="3" fill="#000"/><rect x="427" y="714" width="1" height="3" fill="#000"/><rect x="435" y="714" width="1" height="3" fill="#000"/><rect x="443" y="714" width="1" height="3" fill="#000"/><rect x="451" y="714" width="1" height="3" fill="#000"/><rect x="459" y="714" width="1" height="3" fill="#000"/><rect x="468" y="714" width="1" height="3" fill="#000"/><rect x="476" y="714" width="1" height="3" fill="#000"/><rect x="484" y="714" width="1" height="3" fill="#000"/><rect x="492" y="714" width="1" height="3" fill="#000"/><rect x="500" y="714" width="1" height="3" fill="#000"/><rect x="509" y="714" width="1" height="3" fill="#000"/><rect x="517" y="714" width="1" height="3" fill="#000"/><rect x="525" y="714" width="1" height="3" fill="#000"/><rect x="533" y="714" width="1" height="3" fill="#000"/><rect x="542" y="714" width="1" height="3" fill="#000"/><rect x="550" y="714" width="1" height="3" fill="#000"/><rect x="558" y="714" width="1" height="3" fill="#000"/><rect x="566" y="714" width="1" height="3" fill="#000"/><rect x="574" y="714" width="1" height="3" fill="#000"/><rect x="583" y="714" width="1" height="3" fill="#000"/><rect x="591" y="714" width="1" height="3" fill="#000"/><rect x="599" y="714" width="1" height="3" fill="#000"/><rect x="607" y="714" width="1" height="3" fill="#000"/><rect x="616" y="714" width="1" height="3" fill="#000"/><rect x="624" y="714" width="1" height="3" fill="#000"/><rect x="632" y="714" width="1" height="3" fill="#000"/><rect x="640" y="714" width="1" height="3" fill="#000"/><rect x="648" y="714" width="1" height="3" fill="#000"/><rect x="657" y="714" width="1" height="3" fill="#000"/><rect x="665" y="714" width="1" height="3" fill="#000"/><rect x="673" y="714" width="1" height="3" fill="#000"/><rect x="180" y="714" width="1" height="5" fill="#000"/><rect x="262" y="714" width="1" height="5" fill="#000"/><rect x="344" y="714" width="1" height="5" fill="#000"/><rect x="427" y="714" width="1" height="5" fill="#000"/><rect x="509" y="714" width="1" height="5" fill="#000"/><rect x="591" y="714" width="1" height="5" fill="#000"/><rect x="673" y="714" width="1" height="5" fill="#000"/><polyline points="180.50,573.36 181.00,569.39 181.50,565.46 182.00,561.57 182.50,557.73 183.00,553.95 183.50,550.23 184.00,546.58 184.50,543.01 185.00,539.51 185.50,536.11 186.00,532.79 186.50,529.58 187.00,526.47 187.50,523.47 188.00,520.58 188.50,517.82 189.00,515.17 189.50,512.66 190.00,510.28 190.50,508.03 191.00,505.92 191.50,503.96 192.00,502.15 192.50,500.49 193.00,498.98 193.50,497.62 194.00,496.42 194.50,495.39 195.00,494.51 195.50,493.80 196.00,493.25 196.50,492.87 197.00,492.65 197.50,492.60 198.00,492.72 198.50,493.00 199.00,493.45 199.50,494.06 200.00,494.84 200.50,495.78 201.00,496.88 201.50,498.14 202.00,499.56 202.50,501.13 203.00,502.86 203.50,504.73 204.00,506.75 204.50,508.91 205.00,511.21 205.50,513.65 206.00,516.22 206.50,518.91 207.00,521.72 207.50,524.66 208.00,527.70 208.50,530.85 209.00,534.11 209.50,537.46 210.00,540.90 210.50,544.43 211.00,548.03 211.50,551.71 212.00,555.46 212.50,559.26 213.00,563.12 213.50,567.03 214.00,570.98 214.50,574.96 215.00,578.97 215.50,583.00 216.00,587.05 216.50,591.10 217.00,595.15 217.50,599.20 218.00,603.23 218.50,607.24 219.00,611.23 219.50,615.18 220.00,619.09 220.50,622.95 221.00,626.77 221.50,630.52 222.00,634.20 222.50,637.82 223.00,641.35 223.50,644.80 224.00,648.16 224.50,651.42 225.00,654.59 225.50,657.64 226.00,660.59 226.50,663.42 227.00,666.12 227.50,668.70 228.00,671.15 228.50,673.46 229.00,675.64 229.50,677.67 230.00,679.56 230.50,681.30 231.00,682.89 231.50,684.32 232.00,685.60 232.50,686.72 233.00,687.67 233.50,688.47 234.00,689.10 234.50,689.56 235.00,689.86 235.50,689.99 236.00,689.96 236.50,689.76 237.00,689.39 237.50,688.86 238.00,688.17 238.50,687.31 239.00,686.29 239.50,685.11 240.00,683.77 240.50,682.27 241.00,680.62 241.50,678.82 242.00,676.88 242.50,674.79 243.00,672.56 243.50,670.19 244.00,667.68 244.50,665.05 245.00,662.30 245.50,659.42 246.00,656.43 246.50,653.34 247.00,650.13 247.50,646.83 248.00,643.43 248.50,639.95 249.00,636.38 249.50,632.74 250.00,629.02 250.50,625.25 251.00,621.41 251.50,617.53 252.00,613.60 252.50,609.64 253.00,605.64 253.50,601.62 254.00,597.58 254.50,593.53 255.00,589.48 255.50,585.43 256.00,581.39 256.50,577.36 257.00,573.36 257.50,569.39 258.00,565.46 258.50,561.57 259.00,557.73 259.50,553.95 260.00,550.23 260.50,546.58 261.00,543.01 261.50,539.51 262.00,536.11 262.50,532.79 263.00,529.58 263.50,526.47 264.00,523.47 264.50,520.58 265.00,517.82 265.50,515.17 266.00,512.66 266.50,510.28 267.00,508.03 267.50,505.92 268.00,503.96 268.50,502.15 269.00,500.49 269.50,498.98 270.00,497.62 270.50,496.42 271.00,495.39 271.50,494.51 272.00,493.80 272.50,493.25 273.00,492.87 273.50,492.65 274.00,492.60 274.50,492.72 275.00,493.00 275.50,493.45 276.00,494.06 276.50,494.84 277.00,495.78 277.50,496.88 278.00,498.14 278.50,499.56 279.00,501.13 279.50,502.86 280.00,504.73 280.50,506.75 281.00,508.91 281.50,511.21 282.00,513.65 282.50,516.22 283.00,518.91 283.50,521.72 284.00,524.66 284.50,527.70 285.00,530.85 285.50,534.11 286.00,537.46 286.50,540.90 287.00,544.43 287.50,548.03 288.00,551.71 288.50,555.46 289.00,559.26 289.50,563.12 290.00,567.03 290.50,570.98 291.00,574.96 291.50,578.97 292.00,583.00 292.50,587.05 293.00,591.10 293.50,595.15 294.00,599.20 294.50,603.23 295.00,607.24 295.50,611.23 296.00,615.18 296.50,619.09 297.00,622.95 297.50,626.77 298.00,630.52 298.50,634.20 299.00,637.82 299.50,641.35 300.00,644.80 300.50,648.16 301.00,651.42 301.50,654.59 302.00,657.64 302.50,660.59 303.00,663.42 303.50,666.12 304.00,668.70 304.50,671.15 305.00,673.46 305.50,675.64 306.00,677.67 306.50,679.56 307.00,681.30 307.50,682.89 308.00,684.32 308.50,685.60 309.00,686.72 309.50,687.67 310.00,688.47 310.50,689.10 311.00,689.56 311.50,689.86 312.00,689.99 312.50,689.96 313.00,689.76 313.50,689.39 314.00,688.86 314.50,688.17 315.00,687.31 315.50,686.29 316.00,685.11 316.50,683.77 317.00,682.27 317.50,680.62 318.00,678.82 318.50,676.88 319.00,674.79 319.50,672.56 320.00,670.19 320.50,667.68 321.00,665.05 321.50,662.30 322.00,659.42 322.50,656.43 323.00,653.34 323.50,650.13 324.00,646.83 324.50,643.43 325.00,639.95 325.50,636.38 326.00,632.74 326.50,629.02 327.00,625.25 327.50,621.41 328.00,617.53 328.50,613.60 329.00,609.64 329.50,605.64 330.00,601.62 330.50,597.58 331.00,593.53 331.50,589.48 332.00,585.43 332.50,581.39 333.00,577.36 333.50,573.36 334.00,569.39 334.50,565.46 335.00,561.57 335.50,557.73 336.00,553.95 336.50,550.23 337.00,546.58 337.50,543.01 338.00,539.51 338.50,536.11 339.00,532.79 339.50,529.58 340.00,526.47 340.50,523.47 341.00,520.58 341.50,517.82 342.00,515.17 342.50,512.66 343.00,510.28 343.50,508.03 344.00,505.92 344.50,503.96 345.00,502.15 345.50,500.49 346.00,498.98 346.50,497.62 347.00,496.42 347.50,495.39 348.00,494.51 348.50,493.80 349.00,493.25 349.50,492.87 350.00,492.65 350.50,492.60 351.00,492.72 351.50,493.00 352.00,493.45 352.50,494.06 353.00,494.84 353.50,495.78 354.00,496.88 354.50,498.14 355.00,499.56 355.50,501.13 356.00,502.86 356.50,504.73 357.00,506.75 357.50,508.91 358.00,511.21 358.50,513.65 359.00,516.22 359.50,518.91 360.00,521.72 360.50,524.66 361.00,527.70 361.50,530.85 362.00,534.11 362.50,537.46 363.00,540.90 363.50,544.43 364.00,548.03 364.50,551.71 365.00,555.46 365.50,559.26 366.00,563.12 366.50,567.03 367.00,570.98 367.50,574.96 368.00,578.97 368.50,583.00 369.00,587.05 369.50,591.10 370.00,595.15 370.50,599.20 371.00,603.23 371.50,607.24 372.00,611.23 372.50,615.18 373.00,619.09 373.50,622.95 374.00,626.77 374.50,630.52 375.00,634.20 375.50,637.82 376.00,641.35 376.50,644.80 377.00,648.16 377.50,651.42 378.00,654.59 378.50,657.64 379.00,660.59 379.50,663.42 380.00,666.12 380.50,668.70 381.00,671.15 381.50,673.46 382.00,675.64 382.50,677.67 383.00,679.56 383.50,681.30 384.00,682.89 384.50,684.32 385.00,685.60 385.50,686.72 386.00,687.67 386.50,688.47 387.00,689.10 387.50,689.56 388.00,689.86 388.50,689.99 389.00,689.96 389.50,689.76 390.00,689.39 390.50,688.86 391.00,688.17 391.50,687.31 392.00,686.29 392.50,685.11 393.00,683.77 393.50,682.27 394.00,680.62 394.50,678.82 395.00,676.88 395.50,674.79 396.00,672.56 396.50,670.19 397.00,667.68 397.50,665.05 398.00,662.30 398.50,659.42 399.00,656.43 399.50,653.34 400.00,650.13 400.50,646.83 401.00,643.43 401.50,639.95 402.00,636.38 402.50,632.74 403.00,629.02 403.50,625.25 404.00,621.41 404.50,617.53 405.00,613.60 405.50,609.64 406.00,605.64 406.50,601.62 407.00,597.58 407.50,593.53 408.00,589.48 408.50,585.43 409.00,581.39 409.50,577.36 410.00,573.36 410.50,569.39 411.00,565.46 411.50,561.57 412.00,557.73 412.50,553.95 413.00,550.23 413.50,546.58 414.00,543.01 414.50,539.51 415.00,536.11 415.50,532.79 416.00,529.58 416.50,526.47 417.00,523.47 417.50,520.58 418.00,517.82 418.50,515.17 419.00,512.66 419.50,510.28 420.00,508.03 420.50,505.92 421.00,503.96 421.50,502.15 422.00,500.49 422.50,498.98 423.00,497.62 423.50,496.42 424.00,495.39 424.50,494.51 425.00,493.80 425.50,493.25 426.00,492.87 426.50,492.65 427.00,492.60 427.50,492.72 428.00,493.00 428.50,493.45 429.00,494.06 429.50,494.84 430.00,495.78 430.50,496.88 431.00,498.14 431.50,499.56 432.00,501.13 432.50,502.86 433.00,504.73 433.50,506.75 434.00,508.91 434.50,511.21 435.00,513.65 435.50,516.22 436.00,518.91 436.50,521.72 437.00,524.66 437.50,527.70 438.00,530.85 438.50,534.11 439.00,537.46 439.50,540.90 440.00,544.43 440.50,548.03 441.00,551.71 441.50,555.46 442.00,559.26 442.50,563.12 443.00,567.03 443.50,570.98 444.00,574.96 444.50,578.97 445.00,583.00 445.50,587.05 446.00,591.10 446.50,595.15 447.00,599.20 447.50,603.23 448.00,607.24 448.50,611.23 449.00,615.18 449.50,619.09 450.00,622.95 450.50,626.77 451.00,630.52 451.50,634.20 452.00,637.82 452.50,641.35 453.00,644.80 453.50,648.16 454.00,651.42 454.50,654.59 455.00,657.64 455.50,660.59 456.00,663.42 456.50,666.12 457.00,668.70 457.50,671.15 458.00,673.46 458.50,675.64 459.00,677.67 459.50,679.56 460.00,681.30 460.50,682.89 461.00,684.32 461.50,685.60 462.00,686.72 462.50,687.67 463.00,688.47 463.50,689.10 464.00,689.56 464.50,689.86 465.00,689.99 465.50,689.96 466.00,689.76 466.50,689.39 467.00,688.86 467.50,688.17 468.00,687.31 468.50,686.29 469.00,685.11 469.50,683.77 470.00,682.27 470.50,680.62 471.00,678.82 471.50,676.88 472.00,674.79 472.50,672.56 473.00,670.19 473.50,667.68 474.00,665.05 474.50,662.30 475.00,659.42 475.50,656.43 476.00,653.34 476.50,650.13 477.00,646.83 477.50,643.43 478.00,639.95 478.50,636.38 479.00,632.74 479.50,629.02 480.00,625.25 480.50,621.41 481.00,617.53 481.50,613.60 482.00,609.64 482.50,605.64 483.00,601.62 483.50,597.58 484.00,593.53 484.50,589.48 485.00,585.43 485.50,581.39 486.00,577.36 486.50,573.36 487.00,569.39 487.50,565.46 488.00,561.57 488.50,557.73 489.00,553.95 489.50,550.23 490.00,546.58 490.50,543.01 491.00,539.51 491.50,536.11 492.00,532.79 492.50,529.58 493.00,526.47 493.50,523.47 494.00,520.58 494.50,517.82 495.00,515.17 495.50,512.66 496.00,510.28 496.50,508.03 497.00,505.92 497.50,503.96 498.00,502.15 498.50,500.49 499.00,498.98 499.50,497.62 500.00,496.42 500.50,495.39 501.00,494.51 501.50,493.80 502.00,493.25 502.50,492.87 503.00,492.65 503.50,492.60 504.00,492.72 504.50,493.00 505.00,493.45 505.50,494.06 506.00,494.84 506.50,495.78 507.00,496.88 507.50,498.14 508.00,499.56 508.50,501.13 509.00,502.86 509.50,504.73 510.00,506.75 510.50,508.91 511.00,511.21 511.50,513.65 512.00,516.22 512.50,518.91 513.00,521.72 513.50,524.66 514.00,527.70 514.50,530.85 515.00,534.11 515.50,537.46 516.00,540.90 516.50,544.43 517.00,548.03 517.50,551.71 518.00,555.46 518.50,559.26 519.00,563.12 519.50,567.03 520.00,570.98 520.50,574.96 521.00,578.97 521.50,583.00 522.00,587.05 522.50,591.10 523.00,595.15 523.50,599.20 524.00,603.23 524.50,607.24 525.00,611.23 525.50,615.18 526.00,619.09 526.50,622.95 527.00,626.77 527.50,630.52 528.00,634.20 528.50,637.82 529.00,641.35 529.50,644.80 530.00,648.16 530.50,651.42 531.00,654.59 531.50,657.64 532.00,660.59 532.50,663.42 533.00,666.12 533.50,668.70 534.00,671.15 534.50,673.46 535.00,675.64 535.50,677.67 536.00,679.56 536.50,681.30 537.00,682.89 537.50,684.32 538.00,685.60 538.50,686.72 539.00,687.67 539.50,688.47 540.00,689.10 540.50,689.56 541.00,689.86 541.50,689.99 542.00,689.96 542.50,689.76 543.00,689.39 543.50,688.86 544.00,688.17 544.50,687.31 545.00,686.29 545.50,685.11 546.00,683.77 546.50,682.27 547.00,680.62 547.50,678.82 548.00,676.88 548.50,674.79 549.00,672.56 549.50,670.19 550.00,667.68 550.50,665.05 551.00,662.30 551.50,659.42 552.00,656.43 552.50,653.34 553.00,650.13 553.50,646.83 554.00,643.43 554.50,639.95 555.00,636.38 555.50,632.74 556.00,629.02 556.50,625.25 557.00,621.41 557.50,617.53 558.00,613.60 558.50,609.64 559.00,605.64 559.50,601.62 560.00,597.58 560.50,593.53 561.00,589.48 561.50,585.43 562.00,581.39 562.50,577.36 563.00,573.36 563.50,569.39 564.00,565.46 564.50,561.57 565.00,557.73 565.50,553.95 566.00,550.23 566.50,546.58 567.00,543.01 567.50,539.51 568.00,536.11 568.50,532.79 569.00,529.58 569.50,526.47 570.00,523.47 570.50,520.58 571.00,517.82 571.50,515.17 572.00,512.66 572.50,510.28 573.00,508.03 573.50,505.92 574.00,503.96 574.50,502.15 575.00,500.49 575.50,498.98 576.00,497.62 576.50,496.42 577.00,495.39 577.50,494.51 578.00,493.80 578.50,493.25 579.00,492.87 579.50,492.65 580.00,492.60 580.50,492.72 581.00,493.00 581.50,493.45 582.00,494.06 582.50,494.84 583.00,495.78 583.50,496.88 584.00,498.14 584.50,499.56 585.00,501.13 585.50,502.86 586.00,504.73 586.50,506.75 587.00,508.91 587.50,511.21 588.00,513.65 588.50,516.22 589.00,518.91 589.50,521.72 590.00,524.66 590.50,527.70 591.00,530.85 591.50,534.11 592.00,537.46 592.50,540.90 593.00,544.43 593.50,548.03 594.00,551.71 594.50,555.46 595.00,559.26 595.50,563.12 596.00,567.03 596.50,570.98 597.00,574.96 597.50,578.97 598.00,583.00 598.50,587.05 599.00,591.10 599.50,595.15 600.00,599.20 600.50,603.23 601.00,607.24 601.50,611.23 602.00,615.18 602.50,619.09 603.00,622.95 603.50,626.77 604.00,630.52 604.50,634.20 605.00,637.82 605.50,641.35 606.00,644.80 606.50,648.16 607.00,651.42 607.50,654.59 608.00,657.64 608.50,660.59 609.00,663.42 609.50,666.12 610.00,668.70 610.50,671.15 611.00,673.46 611.50,675.64 612.00,677.67 612.50,679.56 613.00,681.30 613.50,682.89 614.00,684.32 614.50,685.60 615.00,686.72 615.50,687.67 616.00,688.47 616.50,689.10 617.00,689.56 617.50,689.86 618.00,689.99 618.50,689.96 619.00,689.76 619.50,689.39 620.00,688.86 620.50,688.17 621.00,687.31 621.50,686.29 622.00,685.11 622.50,683.77 623.00,682.27 623.50,680.62 624.00,678.82 624.50,676.88 625.00,674.79 625.50,672.56 626.00,670.19 626.50,667.68 627.00,665.05 627.50,662.30 628.00,659.42 628.50,656.43 629.00,653.34 629.50,650.13 630.00,646.83 630.50,643.43 631.00,639.95 631.50,636.38 632.00,632.74 632.50,629.02 633.00,625.25 633.50,621.41 634.00,617.53 634.50,613.60 635.00,609.64 635.50,605.64 636.00,601.62 636.50,597.58 637.00,593.53 637.50,589.48 638.00,585.43 638.50,581.39 639.00,577.36 639.50,573.36 640.00,569.39 640.50,565.46 641.00,561.57 641.50,557.73 642.00,553.95 642.50,550.23 643.00,546.58 643.50,543.01 644.00,539.51 644.50,536.11 645.00,532.79 645.50,529.58 646.00,526.47 646.50,523.47 647.00,520.58 647.50,517.82 648.00,515.17 648.50,512.66 649.00,510.28 649.50,508.03 650.00,505.92 650.50,503.96 651.00,502.15 651.50,500.49 652.00,498.98 652.50,497.62 653.00,496.42 653.50,495.39 654.00,494.51 654.50,493.80 655.00,493.25 655.50,492.87 656.00,492.65 656.50,492.60 657.00,492.72 657.50,493.00 658.00,493.45 658.50,494.06 659.00,494.84 659.50,495.78 660.00,496.88 660.50,498.14 661.00,499.56 661.50,501.13 662.00,502.86 662.50,504.73 663.00,506.75 663.50,508.91 664.00,511.21 664.50,513.65 665.00,516.22 665.50,518.91 666.00,521.72 666.50,524.66 667.00,527.70 667.50,530.85 668.00,534.11 668.50,537.46 669.00,540.90 669.50,544.43 670.00,548.03 670.50,551.71 671.00,555.46 671.50,559.26 672.00,563.12 672.50,567.03 673.00,570.98 673.50,574.96 674.00,578.97" fill="none" stroke="#0b5ca6" stroke-width="1.45" stroke-linejoin="round"/></svg>
<div style="position:absolute;left:90px;top:465.64px;width:80px;text-align:right;font-size:12px;line-height:1;white-space:nowrap;">0.04</div>
<div style="position:absolute;left:90px;top:495.64px;width:80px;text-align:right;font-size:12px;line-height:1;white-space:nowrap;">0.03</div>
<div style="position:absolute;left:90px;top:525.64px;width:80px;text-align:right;font-size:12px;line-height:1;white-space:nowrap;">0.02</div>
<div style="position:absolute;left:90px;top:555.64px;width:80px;text-align:right;font-size:12px;line-height:1;white-space:nowrap;">0.01</div>
<div style="position:absolute;left:90px;top:585.64px;width:80px;text-align:right;font-size:12px;line-height:1;white-space:nowrap;">0</div>
<div style="position:absolute;left:90px;top:615.64px;width:80px;text-align:right;font-size:12px;line-height:1;white-space:nowrap;">-0.01</div>
<div style="position:absolute;left:90px;top:645.64px;width:80px;text-align:right;font-size:12px;line-height:1;white-space:nowrap;">-0.02</div>
<div style="position:absolute;left:90px;top:675.64px;width:80px;text-align:right;font-size:12px;line-height:1;white-space:nowrap;">-0.03</div>
<div style="position:absolute;left:90px;top:705.64px;width:80px;text-align:right;font-size:12px;line-height:1;white-space:nowrap;">-0.04</div>
<div style="position:absolute;left:140.5px;top:721.64px;width:80px;text-align:center;font-size:12px;line-height:1;white-space:nowrap;">0</div>
<div style="position:absolute;left:222.5px;top:721.64px;width:80px;text-align:center;font-size:12px;line-height:1;white-space:nowrap;">0.005</div>
<div style="position:absolute;left:304.5px;top:721.64px;width:80px;text-align:center;font-size:12px;line-height:1;white-space:nowrap;">0.01</div>
<div style="position:absolute;left:387.5px;top:721.64px;width:80px;text-align:center;font-size:12px;line-height:1;white-space:nowrap;">0.015</div>
<div style="position:absolute;left:469.5px;top:721.64px;width:80px;text-align:center;font-size:12px;line-height:1;white-space:nowrap;">0.02</div>
<div style="position:absolute;left:551.5px;top:721.64px;width:80px;text-align:center;font-size:12px;line-height:1;white-space:nowrap;">0.025</div>
<div style="position:absolute;left:633.5px;top:721.64px;width:80px;text-align:center;font-size:12px;line-height:1;white-space:nowrap;">0.03</div>
<div style="position:absolute;left:386.5px;top:741px;width:80px;text-align:center;font-size:12px;line-height:1;">Time</div>
<div style="position:absolute;left:90px;top:584px;width:80px;height:14px;text-align:center;font-size:13px;line-height:14px;transform:rotate(-90deg);">Amplitude</div>
</body></html>
